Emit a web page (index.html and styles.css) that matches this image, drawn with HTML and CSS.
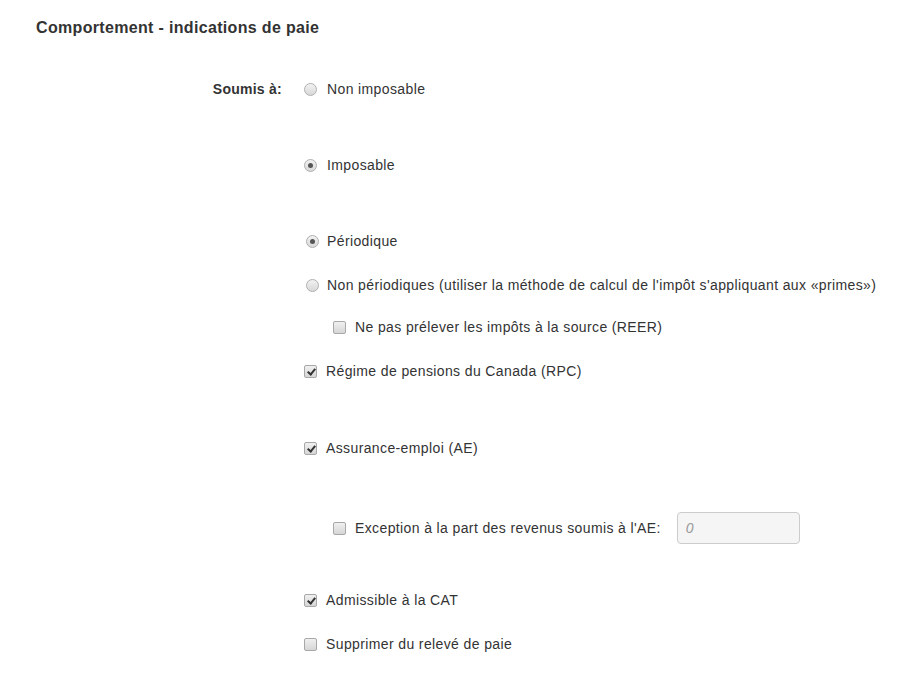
FILE: index.html
```html
<!DOCTYPE html>
<html lang="fr">
<head>
<meta charset="utf-8">
<title>Comportement - indications de paie</title>
<link rel="stylesheet" href="styles.css">
</head>
<body>
<div class="page">
  <h2 class="title">Comportement - indications de paie</h2>
  <div class="form-row">
    <div class="label">Soumis à:</div>
    <div class="options">
      <div class="opt first"><span class="radio"></span><span class="txt">Non imposable</span></div>
      <div class="opt lg"><span class="radio on"></span><span class="txt">Imposable</span></div>
      <div class="opt lg"><span class="radio on shift"></span><span class="txt">Périodique</span></div>
      <div class="opt sm"><span class="radio shift"></span><span class="txt">Non périodiques (utiliser la méthode de calcul de l'impôt s'appliquant aux «primes»)</span></div>
      <div class="opt sm2 nested"><span class="check"></span><span class="txt">Ne pas prélever les impôts à la source (REER)</span></div>
      <div class="opt sm"><span class="check on"></span><span class="txt c">Régime de pensions du Canada (RPC)</span></div>
      <div class="opt lg2"><span class="check on"></span><span class="txt c">Assurance-emploi (AE)</span></div>
      <div class="opt tall nested"><span class="check"></span><span class="txt">Exception à la part des revenus soumis à l'AE:</span><input class="field" type="text" placeholder="0" disabled></div>
      <div class="opt after"><span class="check on"></span><span class="txt c">Admissible à la CAT</span></div>
      <div class="opt sm"><span class="check"></span><span class="txt c">Supprimer du relevé de paie</span></div>
    </div>
  </div>
</div>
</body>
</html>
```

FILE: styles.css
```css
html, body {
  margin: 0;
  padding: 0;
  background: #fff;
}
body {
  font-family: "Liberation Sans", Arial, sans-serif;
  font-size: 14px;
  color: #333;
}
.page {
  padding: 18px 0 0 36px;
}
.title {
  margin: 0;
  font-size: 16px;
  font-weight: bold;
  line-height: 20px;
  letter-spacing: 0.33px;
  color: #333;
}
.form-row {
  display: flex;
  margin-top: 41px;
}
.label {
  width: 246px;
  text-align: right;
  font-weight: bold;
  line-height: 20px;
  height: 20px;
  letter-spacing: 0.25px;
}
.options {
  display: flex;
  flex-direction: column;
  margin-left: 22px;
}
.opt {
  display: flex;
  align-items: center;
  height: 20px;
}
.opt.lg { margin-top: 56px; }
.opt.lg2 { margin-top: 57px; }
.opt.sm { margin-top: 24px; }
.opt.sm2 { margin-top: 22px; }
.opt.tall { height: 32px; margin-top: 54px; }
.opt.after { margin-top: 46px; }
.opt.nested { padding-left: 29px; }
.radio {
  width: 13px;
  height: 13px;
  box-sizing: border-box;
  border-radius: 50%;
  border: 1px solid #b0b0b0;
  background: linear-gradient(#f2f2f2, #d8d8d8);
  margin-right: 10px;
  position: relative;
  flex: none;
}
.radio.shift { margin-left: 2px; margin-right: 8px; }
.radio.on::after {
  content: "";
  position: absolute;
  left: 3px;
  top: 3px;
  width: 5px;
  height: 5px;
  border-radius: 50%;
  background: #555;
}
.check {
  width: 13px;
  height: 13px;
  box-sizing: border-box;
  border: 1px solid #a8a8a8;
  border-radius: 2px;
  background: linear-gradient(#f0f0f0, #d6d6d6);
  margin-right: 9px;
  position: relative;
  flex: none;
}
.check.on::after {
  content: "";
  position: absolute;
  left: 4px;
  top: 1px;
  width: 3px;
  height: 6px;
  border-right: 2px solid #333;
  border-bottom: 2px solid #333;
  transform: rotate(40deg);
}
.txt {
  line-height: 20px;
  white-space: nowrap;
  letter-spacing: 0.38px;
}
.field {
  margin-left: 16px;
  width: 123px;
  height: 32px;
  box-sizing: border-box;
  border: 1px solid #ccc;
  border-radius: 4px;
  background: #f5f5f5;
  padding: 0 8px;
  font-family: "Liberation Sans", Arial, sans-serif;
  font-size: 14px;
  font-style: italic;
}
.field::placeholder { color: #999; font-style: italic; }
```
